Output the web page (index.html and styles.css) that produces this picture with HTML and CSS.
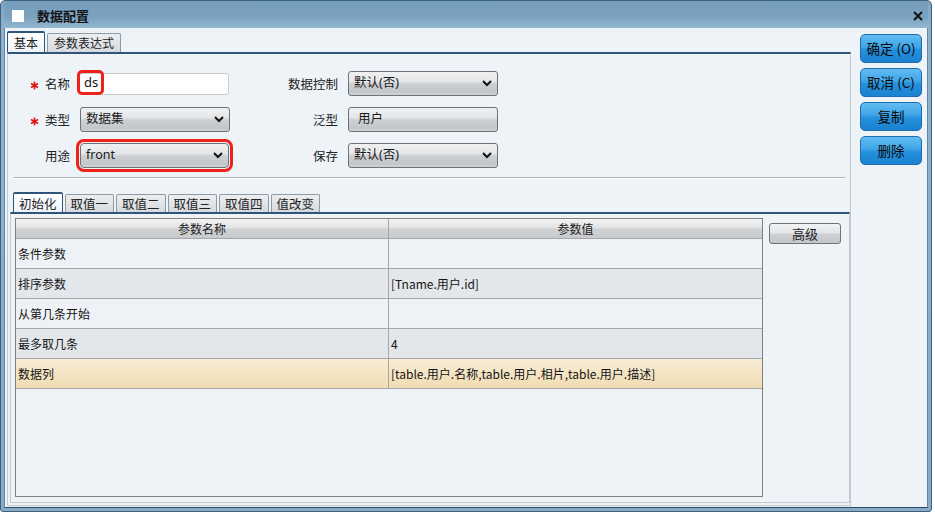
FILE: index.html
```html
<!DOCTYPE html>
<html lang="zh-CN">
<head>
    <meta charset="UTF-8">
    <title>数据配置</title>
    <link rel="stylesheet" href="styles.css">
</head>
<body>
    <div class="window">
        <div class="titlebar">
            <span class="title-icon"></span>
            <span class="title">数据配置</span>
            <svg class="close" width="10" height="10" viewBox="0 0 10 10">
                <path d="M1 1 L9 9 M9 1 L1 9" stroke="#111" stroke-width="2"/>
            </svg>
        </div>
        <div class="client">
            <div class="main">
                <div class="tabs">
                    <div class="tab active">基本</div>
                    <div class="tab">参数表达式</div>
                </div>
                <div class="panel">
                    <div class="form">
                        <label class="lbl"><svg class="req" width="9" height="9" viewBox="0 0 9 9"><path d="M4.5 0.5 V8.5 M1 2.5 L8 6.5 M8 2.5 L1 6.5" stroke="#e0120e" stroke-width="1.6"/></svg>名称</label>
                        <div class="input"><span class="mark">ds</span></div>
                        <label class="lbl2">数据控制</label>
                        <div class="select">默认(否)<svg class="chev" width="10" height="7" viewBox="0 0 10 7"><path d="M1 1 L5 5 L9 1" fill="none" stroke="#111" stroke-width="2"/></svg></div>

                        <label class="lbl"><svg class="req" width="9" height="9" viewBox="0 0 9 9"><path d="M4.5 0.5 V8.5 M1 2.5 L8 6.5 M8 2.5 L1 6.5" stroke="#e0120e" stroke-width="1.6"/></svg>类型</label>
                        <div class="select">数据集<svg class="chev" width="10" height="7" viewBox="0 0 10 7"><path d="M1 1 L5 5 L9 1" fill="none" stroke="#111" stroke-width="2"/></svg></div>
                        <label class="lbl2">泛型</label>
                        <div class="select readonly">用户</div>

                        <label class="lbl">用途</label>
                        <div class="select marked">front<svg class="chev" width="10" height="7" viewBox="0 0 10 7"><path d="M1 1 L5 5 L9 1" fill="none" stroke="#111" stroke-width="2"/></svg></div>
                        <label class="lbl2">保存</label>
                        <div class="select">默认(否)<svg class="chev" width="10" height="7" viewBox="0 0 10 7"><path d="M1 1 L5 5 L9 1" fill="none" stroke="#111" stroke-width="2"/></svg></div>
                    </div>
                    <div class="sep"></div>
                    <div class="tabs inner-tabs">
                        <div class="tab active">初始化</div>
                        <div class="tab">取值一</div>
                        <div class="tab">取值二</div>
                        <div class="tab">取值三</div>
                        <div class="tab">取值四</div>
                        <div class="tab">值改变</div>
                    </div>
                    <div class="inner-panel">
                        <div class="grid">
                            <div class="row head">
                                <div class="cell c1">参数名称</div>
                                <div class="cell c2">参数值</div>
                            </div>
                            <div class="row">
                                <div class="cell c1">条件参数</div>
                                <div class="cell c2"></div>
                            </div>
                            <div class="row alt">
                                <div class="cell c1">排序参数</div>
                                <div class="cell c2">[Tname.用户.id]</div>
                            </div>
                            <div class="row">
                                <div class="cell c1">从第几条开始</div>
                                <div class="cell c2"></div>
                            </div>
                            <div class="row alt">
                                <div class="cell c1">最多取几条</div>
                                <div class="cell c2">4</div>
                            </div>
                            <div class="row selected">
                                <div class="cell c1">数据列</div>
                                <div class="cell c2">[table.用户.名称,table.用户.相片,table.用户.描述]</div>
                            </div>
                        </div>
                        <div class="side">
                            <button class="btn-grey">高级</button>
                        </div>
                    </div>
                </div>
            </div>
            <div class="actions">
                <button class="btn-blue">确定 (O)</button>
                <button class="btn-blue">取消 (C)</button>
                <button class="btn-blue">复制</button>
                <button class="btn-blue">删除</button>
            </div>
        </div>
    </div>
</body>
</html>
```
FILE: styles.css
```css
* {
    margin: 0;
    padding: 0;
    box-sizing: border-box;
}

body {
    font-family: "Noto Sans", "Noto Sans CJK SC", sans-serif;
    font-size: 12px;
    color: #111;
    background-color: #ffffff;
    width: 935px;
    height: 515px;
    overflow: hidden;
}

.window {
    width: 932px;
    height: 512px;
    border: 1px solid #3f5f7c;
    border-radius: 5px 5px 3px 3px;
    background: linear-gradient(#7ea5c2, #8fb3cd 30px, #86abc7);
    padding: 0 3px 3px 3px;
    display: flex;
    flex-direction: column;
}

.titlebar {
    height: 27px;
    display: flex;
    align-items: center;
    padding-left: 8px;
    background: linear-gradient(#759dbc, #7aa2c0 60%, #94b8d2);
}

.title-icon {
    width: 12px;
    height: 12px;
    background-color: #ffffff;
    margin-top: 2px;
}

.title {
    font-family: "Noto Sans CJK SC", sans-serif;
    font-weight: bold;
    font-size: 13px;
    margin-left: 13px;
    margin-top: 2px;
    color: #141414;
}

.close {
    margin-left: auto;
    margin-right: 5px;
    margin-top: 3px;
}

.client {
    flex: 1;
    display: flex;
    background-color: #eef3f8;
    border-left: 1px solid #5a86ae;
    border-right: 1px solid #5a86ae;
    border-bottom: 1px solid #2e4a63;
}

.main {
    width: 847px;
    padding: 3px 0 0 2px;
    display: flex;
    flex-direction: column;
}

/* tabs */
.tabs {
    display: flex;
    align-items: flex-end;
    height: 21px;
    gap: 2px;
}

.tab {
    font-family: "Noto Sans CJK SC", sans-serif;
    font-size: 12px;
    height: 19px;
    line-height: 17px;
    padding: 0 6px;
    border: 1px solid #8f9aa4;
    border-bottom: none;
    border-radius: 2px 2px 0 0;
    background: linear-gradient(#eceef0, #d6dade);
    color: #222;
}

.tab.active {
    height: 21px;
    line-height: 20px;
    border-color: #2f5578;
    border-width: 2px 1px 0 1px;
    background: linear-gradient(#ffffff, #eef3f8);
}

.panel {
    width: 844px;
    height: 454px;
    border: 1px solid #c2c9d0;
    border-top: 2px solid #2f5578;
    padding: 17px 0 0 0;
    display: flex;
    flex-direction: column;
}

/* form */
.form {
    display: grid;
    grid-template-columns: 70px 154px 116px 150px;
    grid-auto-rows: 25px;
    row-gap: 11px;
    align-items: center;
}

.lbl, .lbl2 {
    font-family: "Noto Sans CJK SC", sans-serif;
    font-size: 12.5px;
    text-align: right;
    color: #222;
}

.lbl {
    padding-right: 8px;
}

.lbl2 {
    padding-right: 10px;
}

.req {
    margin-right: 6px;
    vertical-align: -1px;
}

.input {
    width: 151px;
    height: 22px;
    border: 1px solid #c6ccd2;
    border-radius: 3px;
    background-color: #ffffff;
    display: flex;
    align-items: center;
}

.mark {
    height: 25px;
    width: 27px;
    margin-left: -2px;
    margin-top: -2px;
    border: 3px solid #ee2218;
    border-radius: 5px;
    font-size: 13px;
    line-height: 18px;
    padding-left: 4px;
}

.select {
    width: 150px;
    height: 25px;
    margin-left: 2px;
    border: 1px solid #6b7279;
    border-radius: 3px;
    background: linear-gradient(#eff0f1 0%, #e4e6e8 42%, #cdd0d3 52%, #c3c7cb 88%, #d0d3d6 100%);
    display: flex;
    align-items: center;
    padding-left: 5px;
    font-family: "Noto Sans", "Noto Sans CJK SC", sans-serif;
    font-size: 12.5px;
    color: #1a1a1a;
    line-height: 1;
}

.form .select:nth-child(4n) {
    margin-left: 0;
}

.select.readonly {
    padding-left: 9px;
}

.select.marked {
    width: 149px;
    outline: 3px solid #ee2218;
    outline-offset: 1px;
    border-radius: 4px;
}

.chev {
    margin-left: auto;
    margin-right: 5px;
}

.sep {
    margin: 9px 5px 0 6px;
    height: 2px;
    border-top: 1px solid #a9b1b9;
    border-bottom: 1px solid #ffffff;
}

.inner-tabs {
    margin: 13px 0 0 5px;
    height: 20px;
}

.inner-tabs .tab {
    height: 18px;
    line-height: 17px;
    padding: 0 5px;
    font-size: 12.5px;
}

.inner-tabs .tab.active {
    height: 20px;
    line-height: 19px;
}

.inner-panel {
    margin-left: 2px;
    width: 840px;
    height: 291px;
    border: 1px solid #c2c9d0;
    border-top: 2px solid #2f5578;
    padding: 4px 4px 5px 4px;
    display: flex;
    gap: 6px;
}

/* grid of parameters */
.grid {
    width: 748px;
    height: 279px;
    border: 1px solid #808080;
    background-color: #eff3f7;
}

.row {
    display: flex;
    height: 30px;
    border-bottom: 1px solid #a3a7ab;
    background-color: #eef2f6;
}

.row.alt {
    background-color: #e3e7eb;
}

.row.selected {
    background: linear-gradient(#f8edd6, #f0dcb2);
}

.row.head {
    height: 20px;
    background: linear-gradient(#f3f3f3 0%, #e2e3e4 45%, #cfd1d3 55%, #c8cacc 100%);
}

.cell {
    display: flex;
    align-items: center;
    padding-left: 2px;
    font-family: "Noto Sans CJK SC", sans-serif;
    font-size: 12px;
    color: #141414;
}

.cell.c1 {
    width: 373px;
    border-right: 1px solid #a3a7ab;
}

.cell.c2 {
    flex: 1;
}

.row.head .cell {
    justify-content: center;
    padding-left: 0;
    color: #222;
}

.side {
    padding-top: 5px;
}

.btn-grey {
    width: 72px;
    height: 21px;
    border: 1px solid #6b7278;
    border-radius: 3px;
    background: linear-gradient(#f2f3f4 0%, #e3e5e7 45%, #cdd0d3 55%, #c2c6ca 100%);
    font-family: "Noto Sans CJK SC", sans-serif;
    font-size: 13px;
    color: #1a1a1a;
    line-height: 1;
}

/* right column */
.actions {
    flex: 1;
    padding: 6px 0 0 8px;
    display: flex;
    flex-direction: column;
    gap: 5px;
}

.btn-blue {
    width: 62px;
    height: 29px;
    border: 1px solid #1e6bb2;
    border-radius: 5px;
    background: linear-gradient(#62bdf2 0%, #3fa4e6 45%, #2490dc 55%, #1a82d0 100%);
    font-family: "Noto Sans CJK SC", sans-serif;
    font-size: 13.5px;
    color: #0a0a0a;
    line-height: 1;
}
```
